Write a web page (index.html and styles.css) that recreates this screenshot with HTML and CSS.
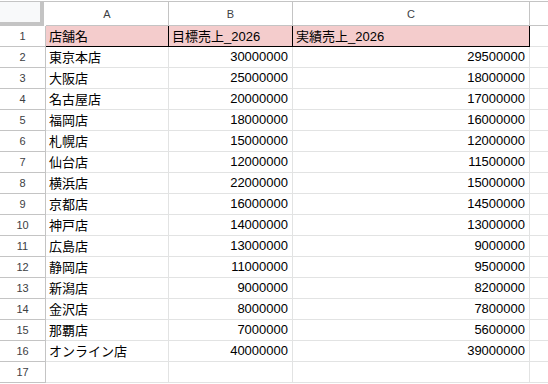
FILE: index.html
```html
<!DOCTYPE html>
<html lang="ja">
<head>
    <meta charset="UTF-8">
    <title>売上シート</title>
    <link rel="stylesheet" href="styles.css">
</head>
<body>
    <div class="sheet">
        <div class="corner"></div>
        <div class="col-head">A</div>
        <div class="col-head">B</div>
        <div class="col-head">C</div>
        <div class="col-head last"></div>

        <div class="row-head">1</div>
        <div class="cell title">店舗名</div>
        <div class="cell title">目標売上_2026</div>
        <div class="cell title">実績売上_2026</div>
        <div class="cell last"></div>

        <div class="row-head">2</div><div class="cell">東京本店</div><div class="cell num">30000000</div><div class="cell num">29500000</div><div class="cell last"></div>
        <div class="row-head">3</div><div class="cell">大阪店</div><div class="cell num">25000000</div><div class="cell num">18000000</div><div class="cell last"></div>
        <div class="row-head">4</div><div class="cell">名古屋店</div><div class="cell num">20000000</div><div class="cell num">17000000</div><div class="cell last"></div>
        <div class="row-head">5</div><div class="cell">福岡店</div><div class="cell num">18000000</div><div class="cell num">16000000</div><div class="cell last"></div>
        <div class="row-head">6</div><div class="cell">札幌店</div><div class="cell num">15000000</div><div class="cell num">12000000</div><div class="cell last"></div>
        <div class="row-head">7</div><div class="cell">仙台店</div><div class="cell num">12000000</div><div class="cell num">11500000</div><div class="cell last"></div>
        <div class="row-head">8</div><div class="cell">横浜店</div><div class="cell num">22000000</div><div class="cell num">15000000</div><div class="cell last"></div>
        <div class="row-head">9</div><div class="cell">京都店</div><div class="cell num">16000000</div><div class="cell num">14500000</div><div class="cell last"></div>
        <div class="row-head">10</div><div class="cell">神戸店</div><div class="cell num">14000000</div><div class="cell num">13000000</div><div class="cell last"></div>
        <div class="row-head">11</div><div class="cell">広島店</div><div class="cell num">13000000</div><div class="cell num">9000000</div><div class="cell last"></div>
        <div class="row-head">12</div><div class="cell">静岡店</div><div class="cell num">11000000</div><div class="cell num">9500000</div><div class="cell last"></div>
        <div class="row-head">13</div><div class="cell">新潟店</div><div class="cell num">9000000</div><div class="cell num">8200000</div><div class="cell last"></div>
        <div class="row-head">14</div><div class="cell">金沢店</div><div class="cell num">8000000</div><div class="cell num">7800000</div><div class="cell last"></div>
        <div class="row-head">15</div><div class="cell">那覇店</div><div class="cell num">7000000</div><div class="cell num">5600000</div><div class="cell last"></div>
        <div class="row-head">16</div><div class="cell">オンライン店</div><div class="cell num">40000000</div><div class="cell num">39000000</div><div class="cell last"></div>
        <div class="row-head">17</div><div class="cell"></div><div class="cell"></div><div class="cell"></div><div class="cell last"></div>
    </div>
</body>
</html>
```

FILE: styles.css
```css
body {
    margin: 0;
    padding-top: 1px;
    background: #fff;
    font-family: Arial, "Liberation Sans", "Noto Sans CJK JP", sans-serif;
}
.sheet {
    display: grid;
    grid-template-columns: 46px 123px 124px 237px 1fr;
    grid-template-rows: 24px repeat(17, 21px);
    border-top: 1px solid #c4c4c4;
}
.corner {
    background: #f8f9fa;
    border-right: 4px solid #c4c4c4;
    border-bottom: 4px solid #c4c4c4;
    margin-right: 2px;
}
.col-head {
    display: flex;
    align-items: center;
    justify-content: center;
    border-right: 1px solid #c4c4c4;
    border-bottom: 1px solid #c4c4c4;
    font-size: 11px;
    color: #3c4043;
}
.row-head {
    display: flex;
    align-items: center;
    justify-content: center;
    border-right: 1px solid #c4c4c4;
    border-bottom: 1px solid #c4c4c4;
    font-size: 11px;
    color: #3c4043;
}
.cell {
    box-sizing: border-box;
    display: flex;
    align-items: center;
    padding: 0 3px 1px;
    border-right: 1px solid #e2e3e3;
    border-bottom: 1px solid #e2e3e3;
    font-size: 13px;
    color: #000;
    white-space: nowrap;
    overflow: hidden;
}
.cell.num {
    justify-content: flex-end;
    padding-right: 4px;
}
.cell.title {
    background: #f4cccc;
    border-right-color: #000;
    border-bottom-color: #000;
}
.last {
    border-right: none;
}
```
